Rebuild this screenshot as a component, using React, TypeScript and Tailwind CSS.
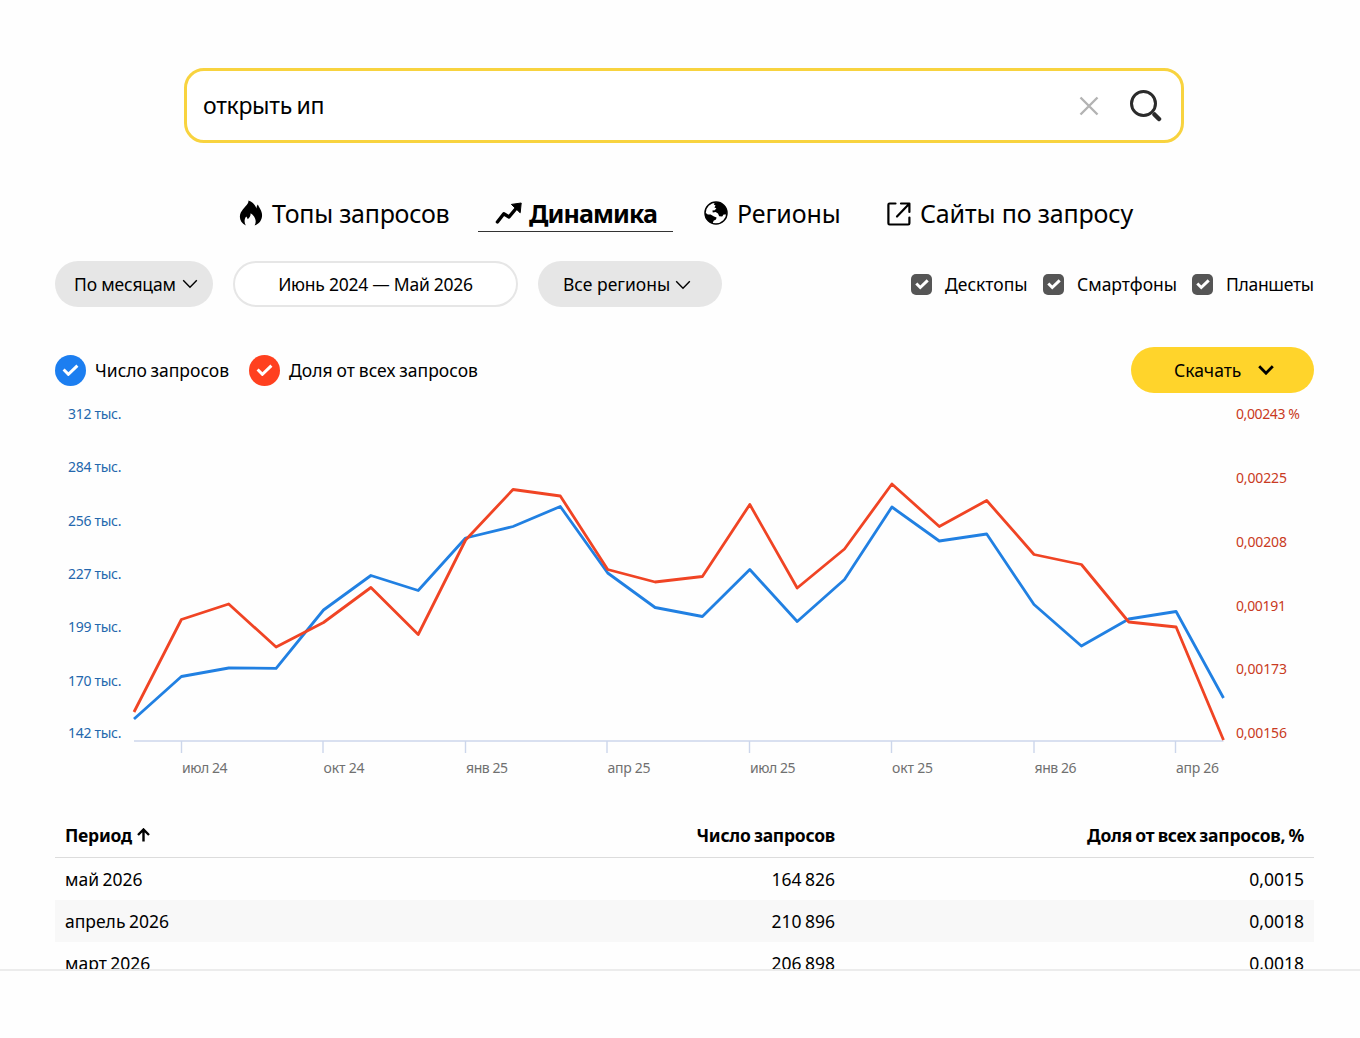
import type { ReactNode } from "react";

const countSeries = [
  719, 676.5, 668, 668.3, 610, 575.5, 590.5, 538, 526.5, 506.5, 573, 607.5,
  616.5, 569.5, 621.5, 579.5, 507, 541, 534, 604.5, 646, 619, 611.5, 698,
];
const shareSeries = [
  712, 619.5, 604, 647, 622.5, 587.5, 634.5, 540, 489.5, 496, 569.5, 582,
  576.5, 504.5, 588, 549, 484, 526.5, 500.5, 554.5, 564.5, 622, 627, 740,
];

const leftAxis = [
  { y: 419, label: "312 тыс." },
  { y: 472, label: "284 тыс." },
  { y: 526, label: "256 тыс." },
  { y: 578.5, label: "227 тыс." },
  { y: 631.5, label: "199 тыс." },
  { y: 685.5, label: "170 тыс." },
  { y: 738, label: "142 тыс." },
];

const rightAxis = [
  { y: 419, label: "0,00243 %", width: 64 },
  { y: 483, label: "0,00225", width: 51 },
  { y: 546.5, label: "0,00208", width: 51 },
  { y: 611, label: "0,00191", width: 50 },
  { y: 673.5, label: "0,00173", width: 51 },
  { y: 738, label: "0,00156", width: 51 },
];

const months = [
  { x: 181.5, label: "июл 24", width: 45.5 },
  { x: 323, label: "окт 24", width: 41 },
  { x: 465.5, label: "янв 25", width: 42 },
  { x: 607, label: "апр 25", width: 43 },
  { x: 749.5, label: "июл 25", width: 45.5 },
  { x: 891.5, label: "окт 25", width: 41 },
  { x: 1034, label: "янв 26", width: 42 },
  { x: 1175.5, label: "апр 26", width: 43 },
];

const rows = [
  { period: "май 2026", count: "164 826", share: "0,0015" },
  { period: "апрель 2026", count: "210 896", share: "0,0018" },
  { period: "март 2026", count: "206 898", share: "0,0018" },
];

function toPoints(series: number[]) {
  return series.map((y, i) => `${(134 + i * 47.37).toFixed(1)},${y}`).join(" ");
}

function FlameIcon() {
  return (
    <svg width="24" height="26" viewBox="0 0 24 26" className="-mt-px shrink-0">
      <path
        d="M9.4 0.6C10 4.2 4.4 7.2 1.8 12.6C-0.4 17.4 1.3 22.8 6.8 25.4C5 22.2 5.3 19.2 7.2 16.6C8 17.6 8.4 18.3 8.7 19.3C10.7 17.8 11.7 15.8 11.6 13.2C15.6 15.6 18.3 20.8 15.6 25.4C21.4 23.2 23.9 18.2 22.8 13C22.2 9.8 20.2 7.6 18.8 4.6C17.8 6 17.6 7.2 17.5 8.6C16.2 4.8 13.2 1.8 9.4 0.6Z"
        fill="black"
      />
    </svg>
  );
}

function TrendIcon() {
  return (
    <svg width="27" height="23" viewBox="0 0 27 23" className="mt-px shrink-0">
      <path
        d="M2.4 20L8.8 11.8L14 15L21.5 6"
        fill="none"
        stroke="black"
        strokeWidth="3.4"
        strokeLinecap="round"
        strokeLinejoin="round"
      />
      <path d="M16.4 2.4L26.2 1L25.2 10.8Z" fill="black" stroke="black" strokeLinejoin="round" />
    </svg>
  );
}

function GlobeIcon() {
  return (
    <svg width="24" height="24" viewBox="0 0 24 24" className="-mt-px shrink-0">
      <circle cx="12" cy="12" r="11" fill="white" stroke="black" strokeWidth="1.5" />
      <path
        d="M1.2 11.5L3.8 13.6L6.6 13.4L10 15.4L12.6 16.4L12 18.6L9.6 19.8L8.6 22.4C4.6 21.2 1 17.4 1.2 11.5Z"
        fill="black"
      />
      <path
        d="M11 1.2L9.8 3.4L11.6 4.6L10.4 6.4L12.4 7.2L10.8 9.2L8.4 9.6L8.8 11.6L11.6 11L14 12.4L15.2 15.2L18.2 15.6L19.6 13.4L22.6 13.6C24 7 19 0.8 11 1.2Z"
        fill="black"
      />
    </svg>
  );
}

function ExternalIcon() {
  return (
    <svg
      width="24"
      height="24"
      viewBox="0 0 24 24"
      fill="none"
      stroke="black"
      strokeWidth="2.2"
      strokeLinecap="round"
      strokeLinejoin="round"
      className="shrink-0"
    >
      <path d="M8.5 1.5H2.6Q1.4 1.5 1.4 2.7V21.3Q1.4 22.5 2.6 22.5H21.2Q22.4 22.5 22.4 21.3V15.5" />
      <path d="M14 1.5H22.4V10M22 2L10 14.5" />
    </svg>
  );
}

function Check({ width, strokeWidth = 2.8 }: { width: number; strokeWidth?: number }) {
  return (
    <svg width={width} viewBox="0 0 16 12">
      <path d="M1.5 5.2L6 9.7L14.5 1.5" fill="none" stroke="white" strokeWidth={strokeWidth} />
    </svg>
  );
}

function Chevron({ strokeWidth = 1.4, className = "" }: { strokeWidth?: number; className?: string }) {
  return (
    <svg width="16" height="10" viewBox="0 0 16 10" className={className}>
      <path d="M1.2 1.2L8 8.2L14.8 1.2" fill="none" stroke="black" strokeWidth={strokeWidth} />
    </svg>
  );
}

function Device({ children, className = "" }: { children: ReactNode; className?: string }) {
  return (
    <label className="flex items-center">
      <span className="mt-px flex size-[21px] items-center justify-center rounded-[5px] bg-[#555]">
        <Check width={14} strokeWidth={3.4} />
      </span>
      <span className={`ml-[13px] whitespace-nowrap ${className}`}>{children}</span>
    </label>
  );
}

function Chart() {
  return (
    <svg width="1259" height="390" viewBox="55 400 1259 390" className="block text-[14px] [word-spacing:0]">
      <g stroke="#ccd6eb" strokeWidth="1.4">
        <path d="M134 741H1223.5" />
        {months.map((m) => (
          <path key={m.x} d={`M${m.x} 741V753`} />
        ))}
      </g>
      <g fill="none" strokeWidth="2.8" strokeLinejoin="round">
        <polyline points={toPoints(countSeries)} stroke="#2180e2" />
        <polyline points={toPoints(shareSeries)} stroke="#f04424" />
      </g>
      <g fill="#2467ad">
        {leftAxis.map((t) => (
          <text key={t.label} x="68" y={t.y} textLength="53.5">
            {t.label}
          </text>
        ))}
      </g>
      <g fill="#c93a22">
        {rightAxis.map((t) => (
          <text key={t.label} x="1236" y={t.y} textLength={t.width}>
            {t.label}
          </text>
        ))}
      </g>
      <g fill="#707070">
        {months.map((m) => (
          <text key={m.label} x={m.x + 0.5} y="773" textLength={m.width}>
            {m.label}
          </text>
        ))}
      </g>
    </svg>
  );
}

export default function App() {
  return (
    <div className="h-[1038px] overflow-hidden bg-[#fefefe] font-['Noto_Sans',sans-serif] text-[17.5px] text-black [word-spacing:-1px]">
      <div className="h-[971px] overflow-hidden border-b-2 border-[#ececec] pt-[68px] pr-[46px] pl-[55px]">
        <div className="ml-[129px] flex h-[75px] w-[1000px] items-center rounded-[20px] border-3 border-[#f8d33f] bg-white pr-[19px] pl-4">
          <span className="flex-1 text-[23px] tracking-[-0.3px]">открыть ип</span>
          <svg width="20" height="20" viewBox="0 0 20 20" className="mr-[30px]">
            <path d="M1.5 1.5L18.5 18.5M18.5 1.5L1.5 18.5" stroke="#b3b3b3" strokeWidth="2.4" />
          </svg>
          <svg width="33" height="33" viewBox="0 0 33 33" fill="none" stroke="#2b2b2b">
            <circle cx="14.5" cy="14.5" r="12" strokeWidth="3" />
            <path d="M25.5 25.5L30 30" strokeWidth="4.5" strokeLinecap="round" />
          </svg>
        </div>

        <nav className="mt-[52px] flex h-[37px] text-[25px] [word-spacing:0]">
          <a className="ml-[184px] flex w-[211px] items-center gap-[9px] tracking-[-0.25px] whitespace-nowrap">
            <FlameIcon />
            <span>Топы запросов</span>
          </a>
          <a className="ml-[28px] flex w-[195px] items-center gap-[7px] border-b border-[#333] pl-[17px] font-bold tracking-[-0.9px] whitespace-nowrap">
            <TrendIcon />
            <span className="mt-0.5">Динамика</span>
          </a>
          <a className="ml-[31px] flex w-[152px] items-center gap-[9px] tracking-[-0.1px] whitespace-nowrap">
            <GlobeIcon />
            <span>Регионы</span>
          </a>
          <a className="ml-[31px] flex items-center gap-[9px] tracking-[-0.15px] whitespace-nowrap">
            <ExternalIcon />
            <span>Сайты по запросу</span>
          </a>
        </nav>

        <div className="mt-[29px] flex h-[46px] items-center">
          <button className="flex h-full w-[158px] items-center rounded-full bg-[#e6e6e6] pl-[19px] tracking-[-0.15px] whitespace-nowrap">
            <span className="w-[108px] text-left">По месяцам</span>
            <Chevron />
          </button>
          <button className="ml-[20px] h-full w-[285px] rounded-full border-2 border-[#e6e6e6] bg-white tracking-[-0.25px] whitespace-nowrap">
            Июнь 2024 — Май 2026
          </button>
          <button className="ml-[20px] flex h-full w-[184px] items-center rounded-full bg-[#e6e6e6] pl-[25px] whitespace-nowrap">
            <span className="w-[112px] text-left">Все регионы</span>
            <Chevron className="mt-0.5" />
          </button>
          <div className="ml-auto flex gap-[15px]">
            <Device className="w-[83px]">Десктопы</Device>
            <Device className="w-[100px]">Смартфоны</Device>
            <Device className="w-[88px] tracking-[-0.3px]">Планшеты</Device>
          </div>
        </div>

        <div className="mt-[40px] flex h-[46px] items-center whitespace-nowrap">
          <span className="flex size-[31px] items-center justify-center rounded-full bg-[#1c7ef0]">
            <Check width={17} />
          </span>
          <span className="ml-[9px] w-[154px]">Число запросов</span>
          <span className="flex size-[31px] items-center justify-center rounded-full bg-[#ff401f]">
            <Check width={17} />
          </span>
          <span className="ml-[9px] [word-spacing:-0.6px]">Доля от всех запросов</span>
          <button className="ml-auto flex h-full w-[183px] items-center rounded-full bg-[#ffd42b] pl-[43px]">
            <span className="w-[84px] text-left">Скачать</span>
            <Chevron strokeWidth={2.8} />
          </button>
        </div>

        <div className="mt-[7px]">
          <Chart />
        </div>

        <table className="mt-[24px] w-full table-fixed border-collapse">
          <thead>
            <tr className="h-[43px] border-b border-[#dcdcdc] tracking-[-0.25px]">
              <th className="w-[320px] pl-[10px] text-left font-bold">
                <span className="flex items-center gap-[5px]">
                  Период
                  <svg width="13" height="14" viewBox="0 0 13 14" fill="none" stroke="black" strokeWidth="2.4">
                    <path d="M6.5 13.5V1.8M1 7L6.5 1.5L12 7" />
                  </svg>
                </span>
              </th>
              <th className="w-[460px] text-right font-bold">Число запросов</th>
              <th className="pr-[10px] text-right font-bold">Доля от всех запросов, %</th>
            </tr>
          </thead>
          <tbody>
            {rows.map((row) => (
              <tr key={row.period} className="h-[42px] first:h-[43px] even:bg-[#f8f8f8]">
                <td className="pl-[10px]">{row.period}</td>
                <td className="text-right">{row.count}</td>
                <td className="pr-[10px] text-right">{row.share}</td>
              </tr>
            ))}
          </tbody>
        </table>
      </div>
    </div>
  );
}
